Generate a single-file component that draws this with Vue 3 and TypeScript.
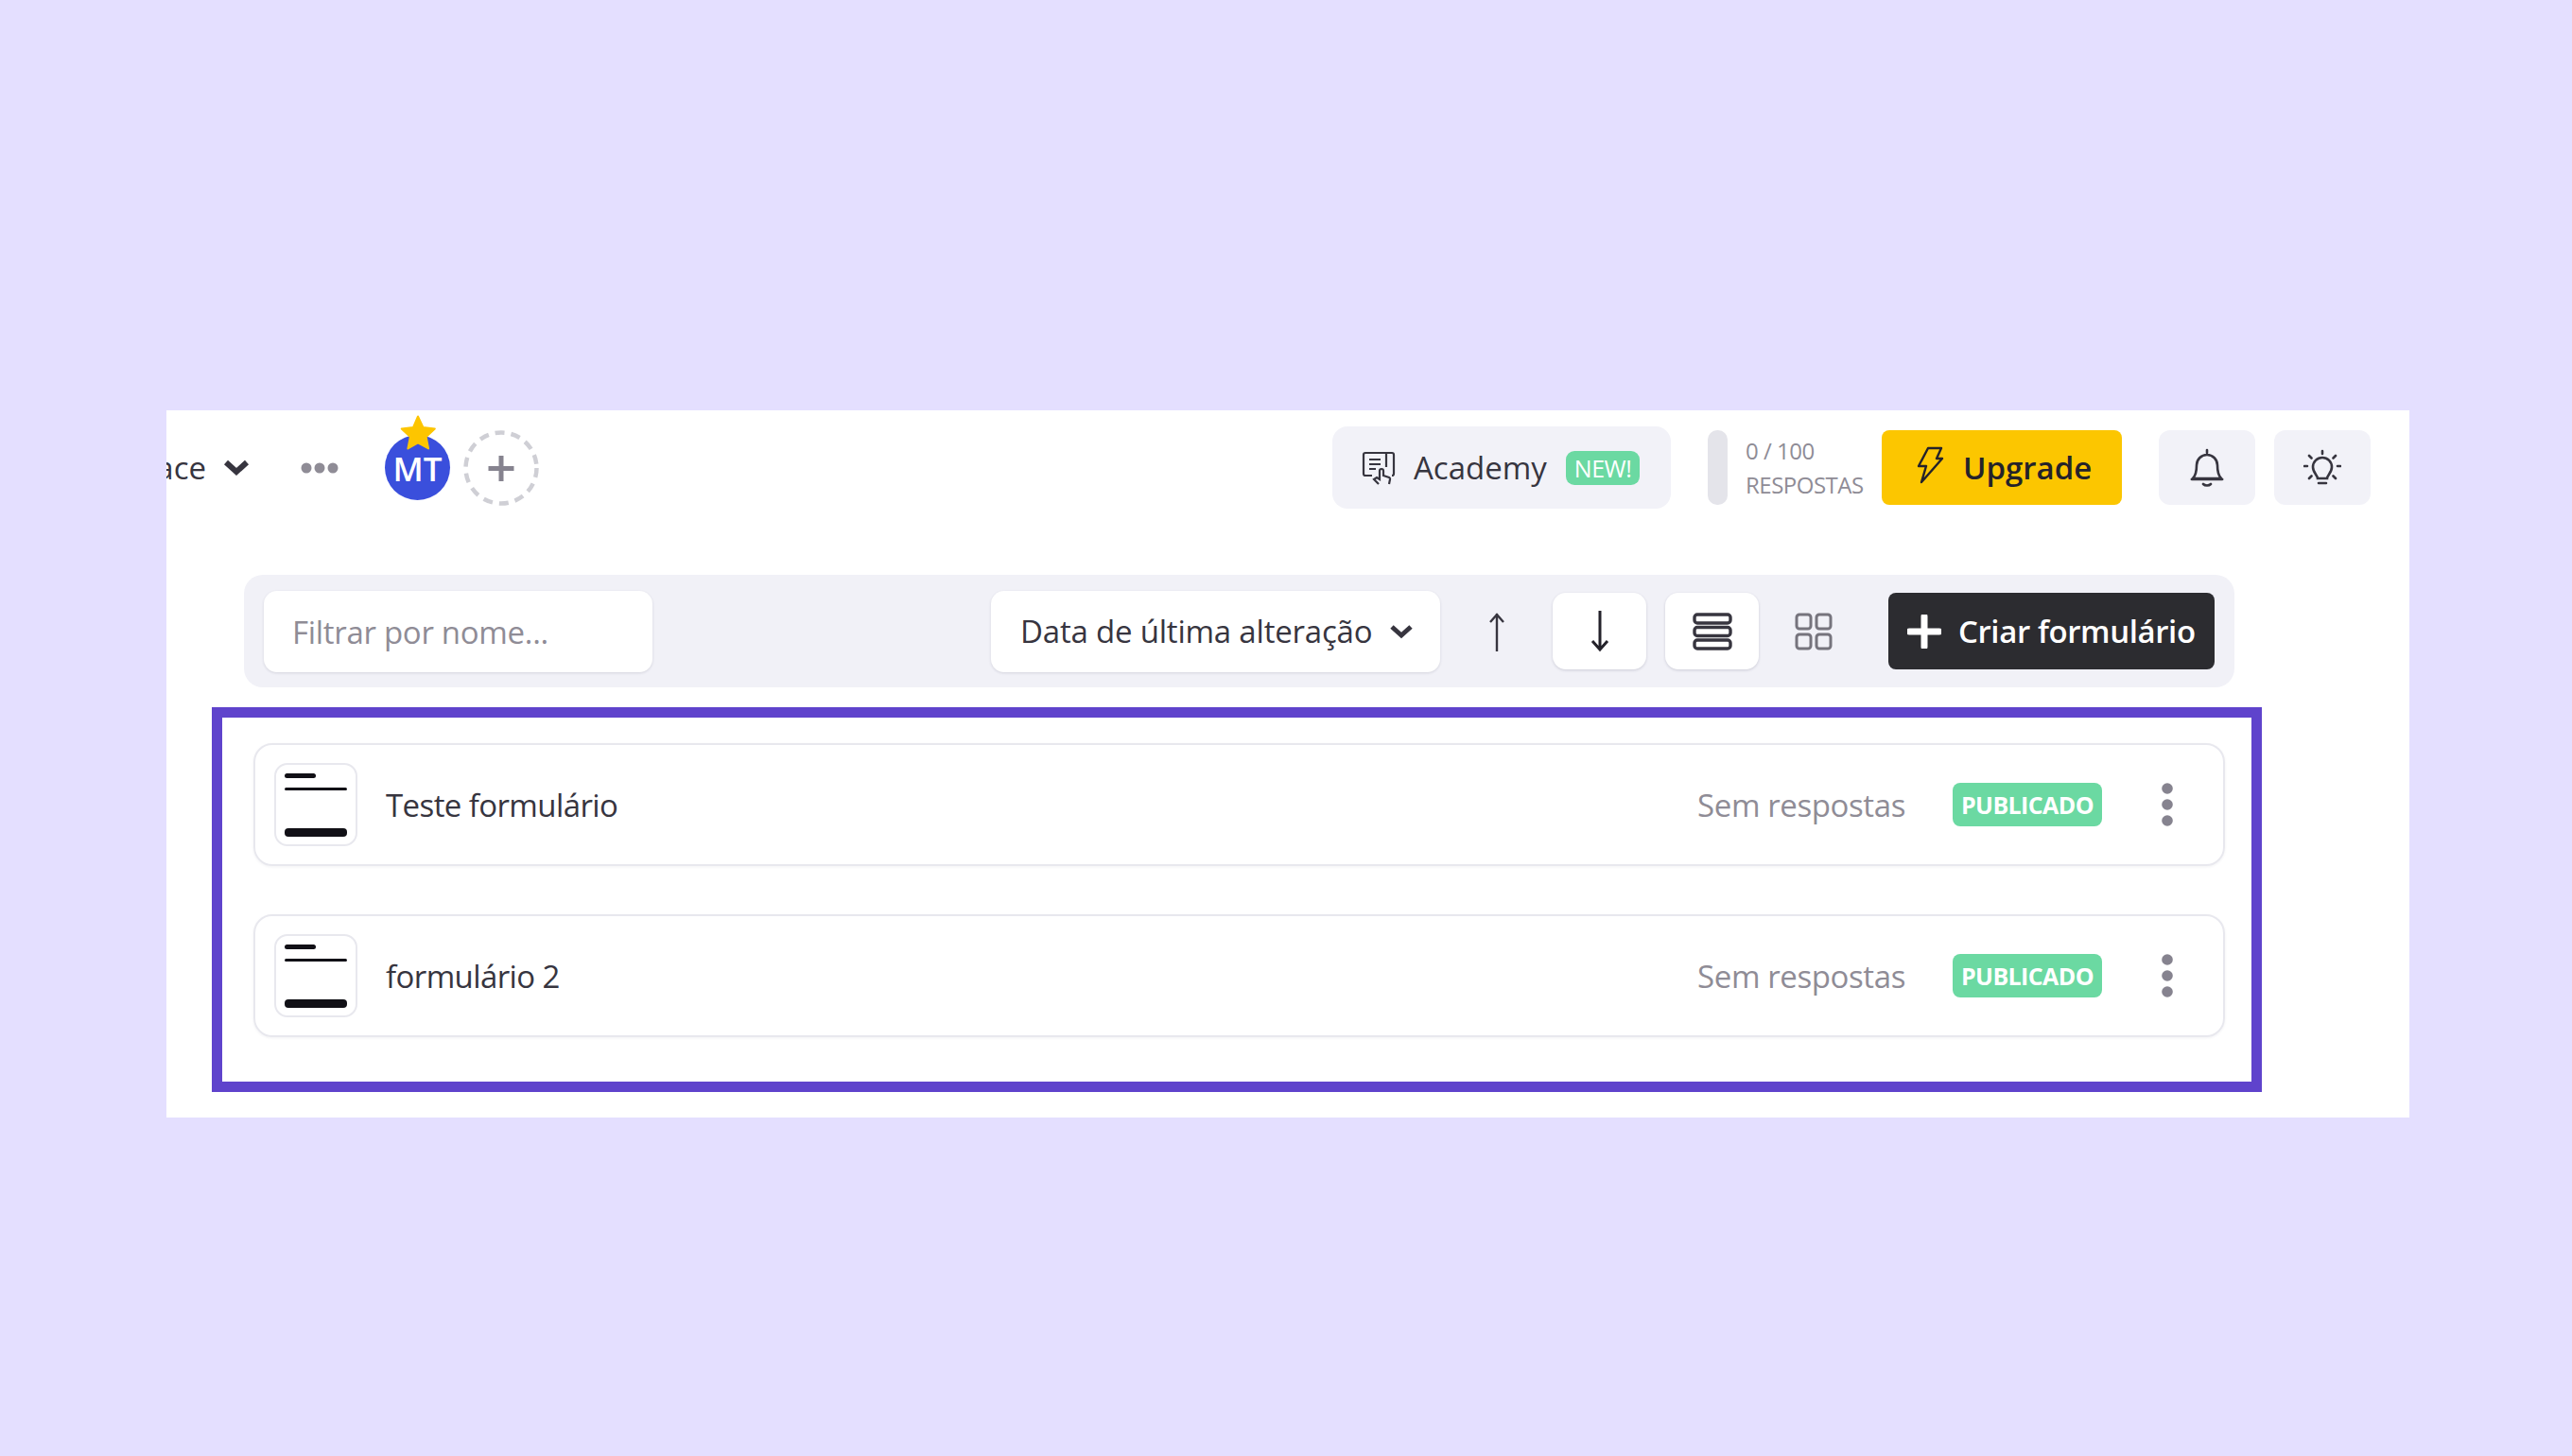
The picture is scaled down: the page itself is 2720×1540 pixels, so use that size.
<script setup lang="ts">
const forms: { name: string }[] = [{ name: 'Teste formulário' }, { name: 'formulário 2' }]
</script>

<template>
  <div class="page">
    <div class="panel">
      <header class="top">
        <div class="ws"><span class="ws-name">Workspace</span></div>
        <svg class="chev" width="28" height="18" viewBox="0 0 28 18"><path d="M3 3l11 10 11-10" fill="none" stroke="#37353f" stroke-width="6" /></svg>
        <svg class="more" width="40" height="12" viewBox="0 0 40 12"><circle cx="6" cy="6" r="5.5" /><circle cx="20" cy="6" r="5.5" /><circle cx="34" cy="6" r="5.5" /></svg>
        <div class="avatar">
          <span>MT</span>
          <svg class="star" width="38" height="37" viewBox="0 0 38 37"><path d="M19 1.5l5.4 11.4 12.4 1.6-9.1 8.6 2.4 12.3L19 29.4 8.4 35.4l2.4-12.3-9.1-8.6 12.4-1.6z" fill="#fdc500" stroke="#fdc500" stroke-linejoin="round" stroke-width="2" /></svg>
        </div>
        <svg class="add" width="80" height="80" viewBox="0 0 80 80">
          <circle cx="40" cy="40" r="37.5" fill="none" stroke="#cfcfd5" stroke-width="4.5" stroke-dasharray="10 7" />
          <path d="M40 27v27M26.500 40.500h27" stroke="#86838f" stroke-width="5" />
        </svg>
        <div class="spacer"></div>
        <div class="academy">
          <svg width="38" height="38" viewBox="0 0 38 38" fill="none" stroke="#37353f" stroke-width="2.2">
            <path d="M12 27H5a2 2 0 0 1-2-2V5a2 2 0 0 1 2-2h28a2 2 0 0 1 2 2v20a2 2 0 0 1-2 2" />
            <path d="M27 3v15M9 10h12M9 15h12M9 20h7" />
            <path d="M19 36l-5-5 3-2 3 2v-9a2 2 0 0 1 4 0v5l6 2a2 2 0 0 1 1 2l-1 5" />
          </svg>
          <span class="academy-label">Academy</span>
          <span class="new">NEW!</span>
        </div>
        <div class="meter"></div>
        <div class="usage"><span>0 / 100</span><span>RESPOSTAS</span></div>
        <div class="upgrade">
          <svg class="bolt" width="30" height="40" viewBox="0 0 30 40" fill="none" stroke="#24222a" stroke-width="2.4" stroke-linejoin="round"><path d="M13 2h14l-5 11h6L6 38l5-17H3z" /></svg>
          <span>Upgrade</span>
        </div>
        <div class="square bell">
          <svg width="36" height="42" viewBox="0 0 36 42" fill="none" stroke="#37353f" stroke-width="2.600" stroke-linecap="round">
            <path d="M18 2v3M3 32c3-3 4-7 4-14a11 11 0 0 1 22 0c0 7 1 11 4 14zM2 33h32M14 38c2 2 6 2 8 0" />
          </svg>
        </div>
        <div class="square sun">
          <svg width="40" height="40" viewBox="0 0 40 40" fill="none" stroke="#37353f" stroke-width="2.600" stroke-linecap="round">
            <path d="M20 2v3M6 7l2.500 2.500M34 7l-2.500 2.500M1 18h3M36 18h3M6 31l2.500-2.500M34 31l-2.500-2.500" />
            <path d="M15 31c0-3-5-6-5-12a10 10 0 0 1 20 0c0 6-5 9-5 12zM16 36h8" />
          </svg>
        </div>
      </header>

      <section class="toolbar">
        <div class="filter">Filtrar por nome...</div>
        <div class="spacer"></div>
        <div class="sort">
          <span>Data de última alteração</span>
          <svg width="26" height="16" viewBox="0 0 26 16"><path d="M3 3l10 9 10-9" fill="none" stroke="#37353f" stroke-width="5" /></svg>
        </div>
        <div class="tool up">
          <svg width="18" height="42" viewBox="0 0 18 42" fill="none" stroke="#37353f" stroke-width="2.400"><path d="M9 42V2M2 11l7-8 7 8" /></svg>
        </div>
        <div class="tool down raised">
          <svg width="20" height="44" viewBox="0 0 20 44" fill="none" stroke="#24222a" stroke-width="3"><path d="M10 0v41M2 32l8 9 8-9" /></svg>
        </div>
        <div class="tool list raised">
          <svg width="42" height="40" viewBox="0 0 42 40" fill="none" stroke="#37353f" stroke-width="3.400">
            <rect x="2" y="2" width="38" height="9" rx="3" />
            <rect x="2" y="15.500" width="38" height="9" rx="3" />
            <rect x="2" y="29" width="38" height="9" rx="3" />
          </svg>
        </div>
        <div class="tool grid">
          <svg width="40" height="40" viewBox="0 0 40 40" fill="none" stroke="#76747d" stroke-width="3">
            <rect x="2" y="2" width="15" height="15" rx="3" />
            <rect x="23" y="2" width="15" height="15" rx="3" />
            <rect x="2" y="23" width="15" height="15" rx="3" />
            <rect x="23" y="23" width="15" height="15" rx="3" />
          </svg>
        </div>
        <div class="create">
          <svg width="36" height="36" viewBox="0 0 36 36"><path d="M18 2v32M2 18h32" stroke="#fff" stroke-width="7" stroke-linecap="round" /></svg>
          <span>Criar formulário</span>
        </div>
      </section>

      <section class="frame">
        <article v-for="form in forms" :key="form.name" class="row">
          <div class="thumb">
            <svg width="66" height="67" viewBox="0 0 66 67">
              <rect x="0" y="0" width="33" height="5" rx="2.500" fill="#111016" />
              <rect x="0" y="15" width="66" height="3" rx="1.500" fill="#111016" />
              <rect x="0" y="58" width="66" height="9" rx="4" fill="#111016" />
            </svg>
          </div>
          <span class="name">{{ form.name }}</span>
          <div class="spacer"></div>
          <span class="resp">Sem respostas</span>
          <span class="badge">PUBLICADO</span>
          <svg class="kebab" width="12" height="46" viewBox="0 0 12 46"><circle cx="6" cy="6" r="5.800" /><circle cx="6" cy="23" r="5.800" /><circle cx="6" cy="40" r="5.800" /></svg>
        </article>
      </section>
    </div>
  </div>
</template>

<style scoped>
.page {
  width: 2720px;
  height: 1540px;
  background: #e4dfff;
  padding: 434px 0 0 176px;
  box-sizing: border-box;
  overflow: hidden;
  font-family: "Open Sans", "Noto Sans", sans-serif;
  color: #37353f;
}
.panel {
  width: 2372px;
  height: 748px;
  background: #fff;
  overflow: hidden;
  padding-top: 17px;
  box-sizing: border-box;
}
.spacer { flex: 1; }
.top {
  height: 87px;
  padding-right: 41px;
  display: flex;
  align-items: center;
}
.ws {
  width: 42px;
  overflow: hidden;
  display: flex;
  justify-content: flex-end;
  font-size: 33px;
  flex: none;
}
.ws-name { flex: none; }
.chev { margin-left: 18px; flex: none; }
.more { margin-left: 54px; fill: #8f8c96; flex: none; }
.avatar {
  position: relative;
  margin-left: 49px;
  width: 69px;
  height: 69px;
  border-radius: 50%;
  background: #3a4fdc;
  color: #fff;
  display: flex;
  align-items: center;
  justify-content: center;
  font-size: 35px;
  font-weight: 600;
  padding-top: 2px;
  box-sizing: border-box;
  flex: none;
}
.star { position: absolute; left: 16px; top: -21px; }
.add { margin-left: 14px; flex: none; }
.academy {
  width: 358px;
  height: 87px;
  box-sizing: border-box;
  padding-left: 30px;
  background: #f2f2f8;
  border-radius: 16px;
  display: flex;
  align-items: center;
}
.academy-label { margin-left: 18px; font-size: 33px; }
.new {
  margin-left: 20px;
  padding: 0 9px;
  height: 36px;
  line-height: 36px;
  border-radius: 9px;
  background: #6bd9a2;
  color: #fff;
  font-size: 25px;
  letter-spacing: -0.5px;
}
.meter {
  margin-left: 39px;
  width: 21px;
  height: 79px;
  border-radius: 10px;
  background: #e4e4ea;
}
.usage {
  margin-left: 19px;
  width: 144px;
  display: flex;
  flex-direction: column;
  gap: 6px;
  font-size: 24px;
  line-height: 30px;
  color: #8f8c96;
  letter-spacing: -0.5px;
  white-space: nowrap;
}
.upgrade {
  width: 254px;
  height: 79px;
  box-sizing: border-box;
  padding-left: 36px;
  border-radius: 8px;
  background: #fcc600;
  color: #24222a;
  display: flex;
  align-items: center;
  gap: 20px;
  font-size: 33px;
  font-weight: 600;
}
.bolt { margin-bottom: 6px; }
.square {
  width: 102px;
  height: 79px;
  border-radius: 12px;
  background: #f2f2f8;
  display: flex;
  align-items: center;
  justify-content: center;
}
.bell { margin-left: 39px; }
.sun { margin-left: 20px; }
.toolbar {
  margin: 70px 0 0 82px;
  width: 2105px;
  height: 119px;
  box-sizing: border-box;
  padding: 0 21px;
  background: #f1f1f7;
  border-radius: 20px;
  display: flex;
  align-items: center;
}
.filter {
  width: 411px;
  height: 86px;
  box-sizing: border-box;
  padding: 2px 0 0 30px;
  background: #fff;
  border-radius: 14px;
  box-shadow: 0 1px 3px rgba(40, 40, 70, .14);
  color: #8f8c96;
  display: flex;
  align-items: center;
  font-size: 33px;
  letter-spacing: -0.3px;
}
.sort {
  width: 475px;
  height: 86px;
  box-sizing: border-box;
  padding: 0 28px 0 31px;
  background: #fff;
  border-radius: 14px;
  box-shadow: 0 1px 3px rgba(40, 40, 70, .14);
  display: flex;
  align-items: center;
  justify-content: space-between;
  font-size: 33px;
  letter-spacing: -0.2px;
  white-space: nowrap;
}
.tool {
  width: 99px;
  height: 81px;
  border-radius: 14px;
  display: flex;
  align-items: center;
  justify-content: center;
  flex: none;
}
.raised { background: #fff; box-shadow: 0 1px 3px rgba(40, 40, 70, .18); }
.up { margin-left: 10px; }
.down { margin-left: 10px; }
.list { margin-left: 20px; }
.grid { margin-left: 8px; }
.create {
  margin-left: 30px;
  width: 345px;
  height: 81px;
  box-sizing: border-box;
  padding-left: 20px;
  background: #2c2c30;
  border-radius: 8px;
  color: #fff;
  display: flex;
  align-items: center;
  gap: 18px;
  font-size: 33px;
  font-weight: 600;
  letter-spacing: -0.4px;
  white-space: nowrap;
}
.frame {
  margin: 21px 0 0 48px;
  width: 2168px;
  height: 407px;
  box-sizing: border-box;
  border: 11px solid #5f43cc;
  padding: 27px 28px 0 33px;
  display: flex;
  flex-direction: column;
  gap: 51px;
}
.row {
  height: 130px;
  flex: none;
  box-sizing: border-box;
  padding: 0 53px 0 20px;
  border: 2px solid #e8e8ee;
  border-radius: 20px;
  box-shadow: 0 1px 3px rgba(40, 40, 70, .06);
  display: flex;
  align-items: center;
}
.thumb {
  width: 88px;
  height: 88px;
  box-sizing: border-box;
  border: 2px solid #e8e8ee;
  border-radius: 14px;
  display: flex;
  align-items: center;
  justify-content: center;
}
.name { margin-left: 30px; font-size: 33px; letter-spacing: -0.6px; }
.resp { font-size: 33px; color: #8f8c96; letter-spacing: -0.4px; }
.badge {
  margin-left: 50px;
  width: 158px;
  height: 46px;
  border-radius: 8px;
  background: #6bd9a2;
  color: #fff;
  font-size: 25px;
  font-weight: 700;
  letter-spacing: -0.6px;
  display: flex;
  align-items: center;
  justify-content: center;
}
.kebab { margin-left: 63px; fill: #86838f; flex: none; }
</style>

<style>
html, body { margin: 0; padding: 0; }
</style>
